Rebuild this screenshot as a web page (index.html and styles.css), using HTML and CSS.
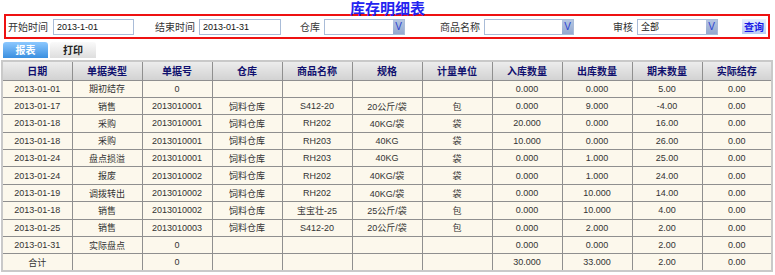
FILE: index.html
```html
<!DOCTYPE html>
<html lang="zh-CN">
<head>
  <meta charset="UTF-8">
  <title>库存明细表</title>
  <link rel="stylesheet" href="styles.css">
</head>
<body>

  <h1 class="title">库存明细表</h1>

  <div class="search-bar">
    <label class="field-label first">开始时间</label>
    <input class="text-input" type="text" value="2013-1-01">

    <label class="field-label gap-21">结束时间</label>
    <input class="text-input wide" type="text" value="2013-01-31">

    <label class="field-label gap-19">仓库</label>
    <div class="select-box">
      <span class="select-value"></span>
      <span class="select-arrow">V</span>
    </div>

    <label class="field-label gap-35">商品名称</label>
    <div class="select-box long">
      <span class="select-value"></span>
      <span class="select-arrow">V</span>
    </div>

    <label class="field-label gap-39">审核</label>
    <div class="select-box">
      <span class="select-value">全部</span>
      <span class="select-arrow">V</span>
    </div>

    <button class="query-btn">查询</button>
  </div>

  <div class="tabs">
    <span class="tab active">报表</span>
    <span class="tab">打印</span>
  </div>

  <table class="report">
    <thead>
      <tr>
        <th>日期</th>
        <th>单据类型</th>
        <th>单据号</th>
        <th>仓库</th>
        <th>商品名称</th>
        <th>规格</th>
        <th>计量单位</th>
        <th>入库数量</th>
        <th>出库数量</th>
        <th>期末数量</th>
        <th>实际结存</th>
      </tr>
    </thead>
    <tbody>
      <tr>
        <td>2013-01-01</td><td>期初结存</td><td>0</td><td></td><td></td><td></td><td></td>
        <td>0.000</td><td>0.000</td><td>5.00</td><td>0.00</td>
      </tr>
      <tr>
        <td>2013-01-17</td><td>销售</td><td>2013010001</td><td>饲料仓库</td><td>S412-20</td><td>20公斤/袋</td><td>包</td>
        <td>0.000</td><td>9.000</td><td>-4.00</td><td>0.00</td>
      </tr>
      <tr>
        <td>2013-01-18</td><td>采购</td><td>2013010001</td><td>饲料仓库</td><td>RH202</td><td>40KG/袋</td><td>袋</td>
        <td>20.000</td><td>0.000</td><td>16.00</td><td>0.00</td>
      </tr>
      <tr>
        <td>2013-01-18</td><td>采购</td><td>2013010001</td><td>饲料仓库</td><td>RH203</td><td>40KG</td><td>袋</td>
        <td>10.000</td><td>0.000</td><td>26.00</td><td>0.00</td>
      </tr>
      <tr>
        <td>2013-01-24</td><td>盘点损溢</td><td>2013010001</td><td>饲料仓库</td><td>RH203</td><td>40KG</td><td>袋</td>
        <td>0.000</td><td>1.000</td><td>25.00</td><td>0.00</td>
      </tr>
      <tr>
        <td>2013-01-24</td><td>报废</td><td>2013010002</td><td>饲料仓库</td><td>RH202</td><td>40KG/袋</td><td>袋</td>
        <td>0.000</td><td>1.000</td><td>24.00</td><td>0.00</td>
      </tr>
      <tr>
        <td>2013-01-19</td><td>调拨转出</td><td>2013010002</td><td>饲料仓库</td><td>RH202</td><td>40KG/袋</td><td>袋</td>
        <td>0.000</td><td>10.000</td><td>14.00</td><td>0.00</td>
      </tr>
      <tr>
        <td>2013-01-18</td><td>销售</td><td>2013010002</td><td>饲料仓库</td><td>宝宝壮-25</td><td>25公斤/袋</td><td>包</td>
        <td>0.000</td><td>10.000</td><td>4.00</td><td>0.00</td>
      </tr>
      <tr>
        <td>2013-01-25</td><td>销售</td><td>2013010003</td><td>饲料仓库</td><td>S412-20</td><td>20公斤/袋</td><td>包</td>
        <td>0.000</td><td>2.000</td><td>2.00</td><td>0.00</td>
      </tr>
      <tr>
        <td>2013-01-31</td><td>实际盘点</td><td>0</td><td></td><td></td><td></td><td></td>
        <td>0.000</td><td>0.000</td><td>2.00</td><td>0.00</td>
      </tr>
      <tr>
        <td>合计</td><td></td><td>0</td><td></td><td></td><td></td><td></td>
        <td>30.000</td><td>33.000</td><td>2.00</td><td>0.00</td>
      </tr>
    </tbody>
  </table>

</body>
</html>
```

FILE: styles.css
```css
* {
  box-sizing: border-box;
}

body {
  margin: 0;
  font-family: "Liberation Sans", Arial, "Noto Sans CJK SC", sans-serif;
  font-size: 9px;
  color: #333;
  background-color: #ffffff;
}

.title {
  margin: 0;
  height: 14px;
  line-height: 15px;
  text-align: center;
  font-family: "Noto Sans CJK SC", sans-serif;
  font-size: 15px;
  font-weight: bold;
  color: #2323f0;
}

/* search bar */
.search-bar {
  display: flex;
  align-items: center;
  margin: 0 5px 0 4px;
  height: 25px;
  border: 2px solid #ee1111;
}

.field-label {
  font-family: "Noto Sans CJK SC", sans-serif;
  font-size: 10px;
  color: #333;
  margin-right: 4px;
}

.field-label.first { margin-left: 2px; margin-right: 5px; }
.field-label.gap-21 { margin-left: 21px; }
.field-label.gap-19 { margin-left: 19px; }
.field-label.gap-35 { margin-left: 35px; }
.field-label.gap-39 { margin-left: 39px; }

.text-input {
  width: 81px;
  height: 16px;
  padding: 0 3px;
  border: 1px solid #a9bcd8;
  font-family: "Liberation Sans", Arial, sans-serif;
  font-size: 9px;
  color: #111;
}

.text-input.wide {
  width: 82px;
}

.select-box {
  display: flex;
  width: 81px;
  height: 16px;
  border: 1px solid #a9bcd8;
  background-color: #fff;
}

.select-box.long {
  width: 90px;
}

.select-value {
  flex: 1;
  padding-left: 3px;
  line-height: 14px;
  font-family: "Noto Sans CJK SC", sans-serif;
  font-size: 9px;
  color: #111;
}

.select-arrow {
  width: 11px;
  background: linear-gradient(#b5c5e2, #93a8cf);
  color: #2a3fd0;
  font-size: 10px;
  line-height: 14px;
  text-align: center;
}

.query-btn {
  margin-left: 24px;
  width: 24px;
  height: 15px;
  padding: 0;
  border: none;
  background: linear-gradient(#e8efff, #b9cdf3);
  font-family: "Noto Sans CJK SC", sans-serif;
  font-size: 10px;
  font-weight: bold;
  color: #1a1ae6;
  cursor: pointer;
}

/* tabs */
.tabs {
  display: flex;
  gap: 2px;
  margin: 3px 0 0 3px;
  height: 16px;
}

.tab {
  width: 46px;
  line-height: 16px;
  text-align: center;
  font-family: "Noto Sans CJK SC", sans-serif;
  font-size: 10px;
  font-weight: bold;
  color: #222;
  border-radius: 3px 3px 0 0;
  background: linear-gradient(#fafafa, #dedede);
}

.tab.active {
  width: 45px;
  color: #ffffff;
  background: linear-gradient(#8cc8ff, #3a8fe0);
}

/* report table */
.report {
  margin: 2px 0 0 1px;
  width: 772px;
  table-layout: fixed;
  border-collapse: collapse;
  border: 2px solid #c9c9c9;
}

.report th,
.report td {
  border: 1px solid #8f8f8f;
  text-align: center;
  padding: 0;
  white-space: nowrap;
  overflow: hidden;
}

.report th {
  height: 19px;
  background: linear-gradient(#ececec, #d2d2d2);
  font-family: "Noto Sans CJK SC", sans-serif;
  font-size: 10px;
  color: #10106e;
}

.report td {
  height: 17.4px;
  background-color: #fcf8ec;
  color: #333;
  font-family: "Liberation Sans", Arial, "Noto Sans CJK SC", sans-serif;
  font-size: 9px;
}
```
